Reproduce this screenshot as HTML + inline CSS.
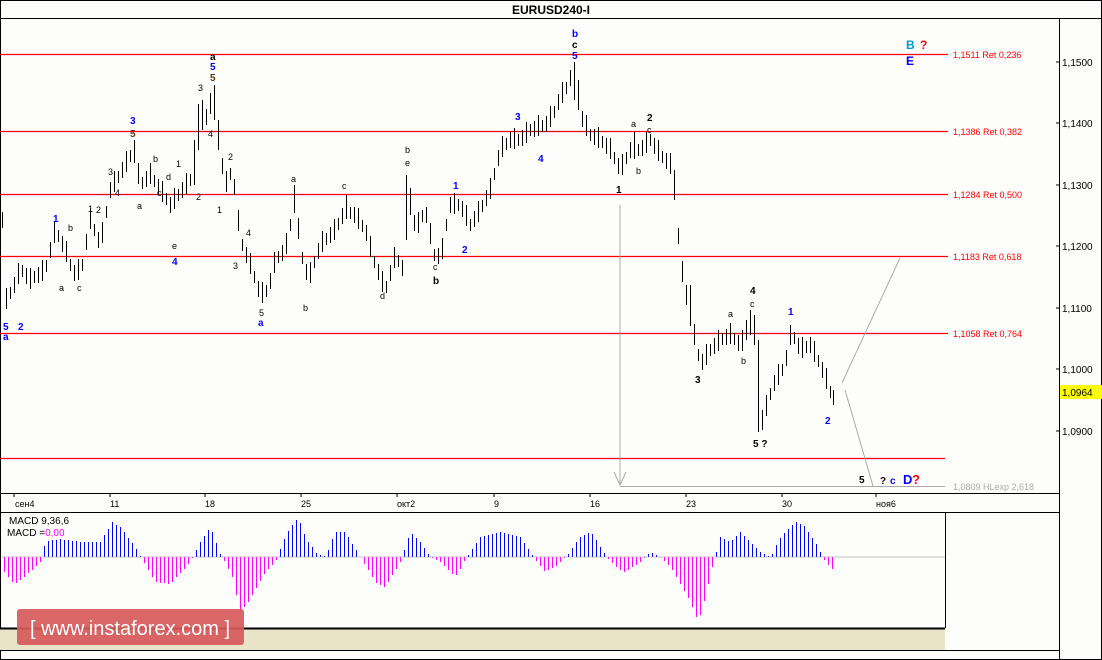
<!DOCTYPE html>
<html><head><meta charset="utf-8"><style>
body{margin:0;background:#fff;}
svg{display:block;font-family:"Liberation Sans",sans-serif;}
</style></head><body>
<svg width="1102" height="660" viewBox="0 0 1102 660" xmlns="http://www.w3.org/2000/svg">
<rect x="0" y="0" width="1102" height="660" fill="#fdfdfb"/>
<rect x="0.5" y="0.5" width="1101" height="659" fill="none" stroke="#000"/>
<line x1="0" y1="18.5" x2="1102" y2="18.5" stroke="#000"/>
<text x="551" y="14" font-size="12" font-weight="bold" text-anchor="middle">EURUSD240-I</text>
<line x1="1059.5" y1="18" x2="1059.5" y2="660" stroke="#000"/>
<line x1="0" y1="493.5" x2="1059" y2="493.5" stroke="#000"/>
<line x1="0" y1="512.5" x2="1059" y2="512.5" stroke="#000"/>
<line x1="945.5" y1="512" x2="945.5" y2="628" stroke="#000"/>
<rect x="0" y="628" width="945" height="22" fill="#e8e4c8"/>
<line x1="0" y1="628.5" x2="945" y2="628.5" stroke="#000" stroke-width="2"/>
<line x1="0" y1="650.5" x2="1059" y2="650.5" stroke="#000"/>
<g font-size="10" fill="#000">
<text x="1062" y="66">1,1500</text><text x="1062" y="127">1,1400</text><text x="1062" y="189">1,1300</text>
<text x="1062" y="250">1,1200</text><text x="1062" y="312">1,1100</text><text x="1062" y="373">1,1000</text>
<text x="1062" y="435">1,0900</text>
</g>
<g stroke="#000"><line x1="1056" y1="62" x2="1059" y2="62"/><line x1="1056" y1="123" x2="1059" y2="123"/><line x1="1056" y1="185" x2="1059" y2="185"/><line x1="1056" y1="246" x2="1059" y2="246"/><line x1="1056" y1="308" x2="1059" y2="308"/><line x1="1056" y1="369" x2="1059" y2="369"/><line x1="1056" y1="431" x2="1059" y2="431"/></g>
<rect x="1060" y="385" width="42" height="14" fill="#ffff00"/>
<text x="1062" y="396" font-size="10">1,0964</text>
<g font-size="9" fill="#000">
<text x="15" y="507">сен4</text><text x="110" y="507">11</text><text x="205" y="507">18</text><text x="301" y="507">25</text>
<text x="397" y="507">окт2</text><text x="494" y="507">9</text><text x="590" y="507">16</text><text x="686" y="507">23</text>
<text x="782" y="507">30</text><text x="876" y="507">ноя6</text>
</g>
<g stroke="#000"><line x1="14" y1="493" x2="14" y2="497"/><line x1="110" y1="493" x2="110" y2="497"/><line x1="205" y1="493" x2="205" y2="497"/><line x1="301" y1="493" x2="301" y2="497"/><line x1="397" y1="493" x2="397" y2="497"/><line x1="494" y1="493" x2="494" y2="497"/><line x1="590" y1="493" x2="590" y2="497"/><line x1="686" y1="493" x2="686" y2="497"/><line x1="782" y1="493" x2="782" y2="497"/><line x1="876" y1="493" x2="876" y2="497"/></g>
<g stroke="#f00" stroke-width="1.3">
<line x1="0" y1="54.5" x2="948" y2="54.5"/><line x1="0" y1="131.5" x2="948" y2="131.5"/><line x1="0" y1="194.5" x2="948" y2="194.5"/>
<line x1="0" y1="256.5" x2="948" y2="256.5"/><line x1="0" y1="333.5" x2="948" y2="333.5"/><line x1="0" y1="458.5" x2="945" y2="458.5"/>
</g>
<g font-size="9" fill="#f00">
<text x="953" y="58">1,1511 Ret 0,236</text><text x="953" y="135">1,1386 Ret 0,382</text><text x="953" y="198">1,1284 Ret 0,500</text>
<text x="953" y="260">1,1183 Ret 0,618</text><text x="953" y="337">1,1058 Ret 0,764</text>
</g>
<line x1="620" y1="486.5" x2="945" y2="486.5" stroke="#aaa"/>
<text x="953" y="490" font-size="9" fill="#aaa">1,0809 HLexp 2,618</text>
<g stroke="#aaa" fill="none"><path d="M620 205V485M614 472L620 485L626 472"/><path d="M842 383L900 258"/><path d="M845 390L873 486"/></g>
<path stroke="#000" stroke-width="1" fill="none" d="M2.5 212V228M6.5 288V309M10.5 287V299M14.5 277V293M18.5 263V284M22.5 265V277M26.5 268V284M30.5 268V289M34.5 271V283M38.5 267V283M42.5 260V281M46.5 260V272M50.5 242V258M54.5 222V243M58.5 230V242M62.5 236V252M66.5 241V262M70.5 259V271M74.5 265V281M78.5 259V280M82.5 259V271M86.5 234V250M90.5 208V229M94.5 224V236M98.5 232V248M102.5 222V243M106.5 206V218M110.5 182V198M114.5 171V192M118.5 171V183M122.5 162V178M126.5 151V172M130.5 150V162M134.5 140V163M138.5 163V184M142.5 177V189M146.5 171V187M150.5 163V184M154.5 175V187M158.5 179V195M162.5 181V202M166.5 193V205M170.5 197V213M174.5 188V209M178.5 189V201M182.5 182V198M186.5 173V194M190.5 174V186M194.5 140V185M198.5 104V150M202.5 100V130M206.5 109V125M210.5 93V114M214.5 85V120M218.5 120V150M222.5 158V174M226.5 171V192M230.5 168V180M234.5 179V195M238.5 210V231M242.5 239V251M246.5 247V263M250.5 253V274M254.5 271V283M258.5 281V297M262.5 282V303M266.5 285V297M270.5 273V289M274.5 252V273M278.5 251V263M282.5 245V261M286.5 233V254M290.5 219V231M294.5 185V213M298.5 218V239M302.5 252V264M306.5 264V280M310.5 262V283M314.5 256V268M318.5 243V259M322.5 231V252M326.5 233V245M330.5 227V243M334.5 219V240M338.5 218V230M342.5 208V224M346.5 195V219M350.5 207V219M354.5 207V223M358.5 208V229M362.5 220V232M366.5 225V241M370.5 236V257M374.5 256V268M378.5 264V280M382.5 271V292M386.5 281V293M390.5 265V281M394.5 247V268M398.5 255V267M402.5 260V276M406.5 175V240M410.5 188V215M414.5 215V231M418.5 212V233M422.5 210V222M426.5 207V223M430.5 223V244M434.5 249V261M438.5 248V264M442.5 238V259M446.5 219V231M450.5 197V213M454.5 193V214M458.5 199V211M462.5 201V217M466.5 205V226M470.5 219V231M474.5 211V227M478.5 201V222M482.5 200V212M486.5 190V206M490.5 178V199M494.5 168V180M498.5 150V166M502.5 136V157M506.5 138V150M510.5 132V148M514.5 128V149M518.5 134V146M522.5 130V146M526.5 122V143M530.5 124V136M534.5 121V137M538.5 115V136M542.5 120V132M546.5 116V132M550.5 106V127M554.5 106V118M558.5 94V110M562.5 82V103M566.5 82V94M570.5 70V86M574.5 62V100M578.5 80V110M582.5 111V127M586.5 115V136M590.5 129V141M594.5 129V145M598.5 127V148M602.5 136V148M606.5 138V154M610.5 138V159M614.5 152V164M618.5 158V174M622.5 154V175M626.5 152V164M630.5 142V158M634.5 132V159M638.5 144V156M642.5 140V156M646.5 132V153M650.5 134V146M654.5 138V154M658.5 140V161M662.5 151V163M666.5 153V169M670.5 153V174M674.5 170V200M678.5 228V244M682.5 261V282M686.5 285V305M690.5 285V326M694.5 324V345M698.5 349V361M702.5 354V370M706.5 344V365M710.5 344V356M714.5 338V354M718.5 330V351M722.5 333V345M726.5 329V345M730.5 323V344M734.5 333V345M738.5 335V351M742.5 330V351M746.5 320V340M750.5 310V335M754.5 315V345M758.5 340V432M762.5 410V430M766.5 395V416M770.5 388V400M774.5 375V391M778.5 364V385M782.5 364V376M786.5 350V366M790.5 325V345M794.5 332V344M798.5 338V354M802.5 337V358M806.5 341V353M810.5 337V353M814.5 341V362M818.5 355V367M822.5 362V378M826.5 368V389M830.5 386V398M833.5 390V405"/>
<path stroke="#00f" fill="none" d="M44.5 557V546M48.5 557V541M52.5 557V540M56.5 557V540M60.5 557V539M64.5 557V540M68.5 557V540M72.5 557V541M76.5 557V541M80.5 557V542M84.5 557V542M88.5 557V542M92.5 557V542M96.5 557V542M100.5 557V542M104.5 557V535M108.5 557V529M112.5 557V522M116.5 557V525M120.5 557V527M124.5 557V532M128.5 557V538M132.5 557V543M136.5 557V549M140.5 557V556M196.5 557V550M200.5 557V542M204.5 557V536M208.5 557V530M212.5 557V532M216.5 557V543M220.5 557V554M280.5 557V549M284.5 557V539M288.5 557V531M292.5 557V525M296.5 557V520M300.5 557V523M304.5 557V534M308.5 557V542M312.5 557V547M316.5 557V553M320.5 557V555M324.5 557V556M328.5 557V550M332.5 557V539M336.5 557V532M340.5 557V532M344.5 557V532M348.5 557V537M352.5 557V544M356.5 557V550M404.5 557V550M408.5 557V538M412.5 557V534M416.5 557V538M420.5 557V542M424.5 557V548M428.5 557V554M468.5 557V555M472.5 557V549M476.5 557V543M480.5 557V537M484.5 557V536M488.5 557V535M492.5 557V534M496.5 557V533M500.5 557V532M504.5 557V533M508.5 557V534M512.5 557V535M516.5 557V536M520.5 557V537M524.5 557V543M528.5 557V549M532.5 557V555M568.5 557V554M572.5 557V548M576.5 557V542M580.5 557V537M584.5 557V535M588.5 557V533M592.5 557V534M596.5 557V540M600.5 557V547M604.5 557V553M648.5 557V554M652.5 557V553M656.5 557V555M716.5 557V552M720.5 557V537M724.5 557V539M728.5 557V541M732.5 557V540M736.5 557V536M740.5 557V532M744.5 557V536M748.5 557V540M752.5 557V544M756.5 557V548M760.5 557V552M764.5 557V554M768.5 557V556M772.5 557V554M776.5 557V545M780.5 557V538M784.5 557V533M788.5 557V529M792.5 557V525M796.5 557V522M800.5 557V524M804.5 557V526M808.5 557V532M812.5 557V538M816.5 557V544M820.5 557V552"/>
<path stroke="#f0f" fill="none" d="M4.5 557V572M8.5 557V577M12.5 557V582M16.5 557V583M20.5 557V580M24.5 557V577M28.5 557V573M32.5 557V570M36.5 557V566M40.5 557V562M144.5 557V563M148.5 557V570M152.5 557V577M156.5 557V582M160.5 557V583M164.5 557V583M168.5 557V584M172.5 557V582M176.5 557V577M180.5 557V573M184.5 557V569M188.5 557V564M192.5 557V558M224.5 557V561M228.5 557V569M232.5 557V577M236.5 557V595M240.5 557V612M244.5 557V607M248.5 557V602M252.5 557V595M256.5 557V588M260.5 557V581M264.5 557V574M268.5 557V569M272.5 557V565M276.5 557V560M364.5 557V564M368.5 557V570M372.5 557V577M376.5 557V583M380.5 557V585M384.5 557V587M388.5 557V582M392.5 557V575M396.5 557V569M400.5 557V562M432.5 557V558M436.5 557V560M440.5 557V562M444.5 557V566M448.5 557V570M452.5 557V574M456.5 557V575M460.5 557V569M464.5 557V561M536.5 557V561M540.5 557V566M544.5 557V571M548.5 557V570M552.5 557V568M556.5 557V566M560.5 557V562M564.5 557V558M608.5 557V559M612.5 557V563M616.5 557V567M620.5 557V570M624.5 557V572M628.5 557V570M632.5 557V567M636.5 557V565M640.5 557V562M644.5 557V558M664.5 557V561M668.5 557V565M672.5 557V570M676.5 557V577M680.5 557V584M684.5 557V591M688.5 557V598M692.5 557V607M696.5 557V617M700.5 557V615M704.5 557V601M708.5 557V584M712.5 557V567M824.5 557V560M828.5 557V565M832.5 557V569"/>
<line x1="2" y1="557" x2="945" y2="557" stroke="#888" stroke-width="0.5"/>
<text x="9" y="524" font-size="10">MACD 9,36,6</text>
<text x="7" y="536" font-size="10">MACD =<tspan fill="#f0f">0,00</tspan></text>
<g font-size="10" font-weight="bold">
<text x="3" y="330" fill="#00f">5</text><text x="18" y="330" fill="#00f">2</text><text x="3" y="340" fill="#00f">a</text>
<text x="53" y="222" fill="#00f">1</text><text x="130" y="124" fill="#00f">3</text><text x="130" y="137" fill="#630">5</text>
<text x="172" y="265" fill="#00f">4</text><text x="210" y="60" fill="#000">a</text><text x="210" y="70" fill="#00f">5</text><text x="210" y="81" fill="#630">5</text>
<text x="258" y="326" fill="#00f">a</text><text x="453" y="189" fill="#00f">1</text><text x="462" y="253" fill="#00f">2</text>
<text x="515" y="120" fill="#00f">3</text><text x="538" y="162" fill="#00f">4</text><text x="572" y="37" fill="#00f">b</text>
<text x="572" y="48" fill="#000">c</text><text x="572" y="59" fill="#00f">5</text><text x="433" y="284" fill="#000">b</text>
<text x="616" y="193" fill="#000">1</text><text x="647" y="121" fill="#000">2</text><text x="695" y="383" fill="#000">3</text>
<text x="750" y="294" fill="#000">4</text><text x="753" y="447" fill="#000">5 ?</text><text x="788" y="315" fill="#00f">1</text>
<text x="825" y="424" fill="#00f">2</text><text x="859" y="483" fill="#000">5</text>
<text x="880" y="484" fill="#000">?</text><text x="890" y="484" fill="#00f">c</text>
<text x="903" y="484" font-size="13" fill="#00f">D</text><text x="912" y="484" font-size="13" fill="#f00">?</text>
<text x="906" y="49" font-size="12" fill="#09c">B</text><text x="920" y="49" font-size="12" fill="#f00">?</text>
<text x="906" y="65" font-size="12" fill="#00f">E</text>
</g>
<g font-size="9" fill="#000">
<text x="68" y="231">b</text><text x="59" y="291">a</text><text x="77" y="291">c</text><text x="96" y="213">2</text><text x="88" y="212">1</text>
<text x="108" y="175">3</text><text x="115" y="196">4</text><text x="137" y="209">a</text><text x="153" y="162">b</text><text x="157" y="196">c</text>
<text x="166" y="180">d</text><text x="172" y="249">e</text><text x="176" y="167">1</text><text x="196" y="200">2</text><text x="198" y="91">3</text>
<text x="208" y="137">4</text><text x="228" y="160">2</text><text x="217" y="213">1</text><text x="233" y="269">3</text><text x="246" y="236">4</text>
<text x="259" y="316">5</text><text x="291" y="182">a</text><text x="303" y="311">b</text><text x="342" y="189">c</text><text x="380" y="299">d</text>
<text x="405" y="153">b</text><text x="405" y="166">e</text><text x="433" y="270">c</text><text x="631" y="127">a</text><text x="647" y="133">c</text>
<text x="636" y="174">b</text><text x="728" y="317">a</text><text x="750" y="307">c</text><text x="741" y="364">b</text>
</g>
<rect x="17" y="609" width="227" height="36" rx="3" fill="#d65a5a" opacity="0.92"/>
<text x="130" y="635" font-size="20" fill="#fff" text-anchor="middle">[ www.instaforex.com ]</text>
</svg>
</body></html>
